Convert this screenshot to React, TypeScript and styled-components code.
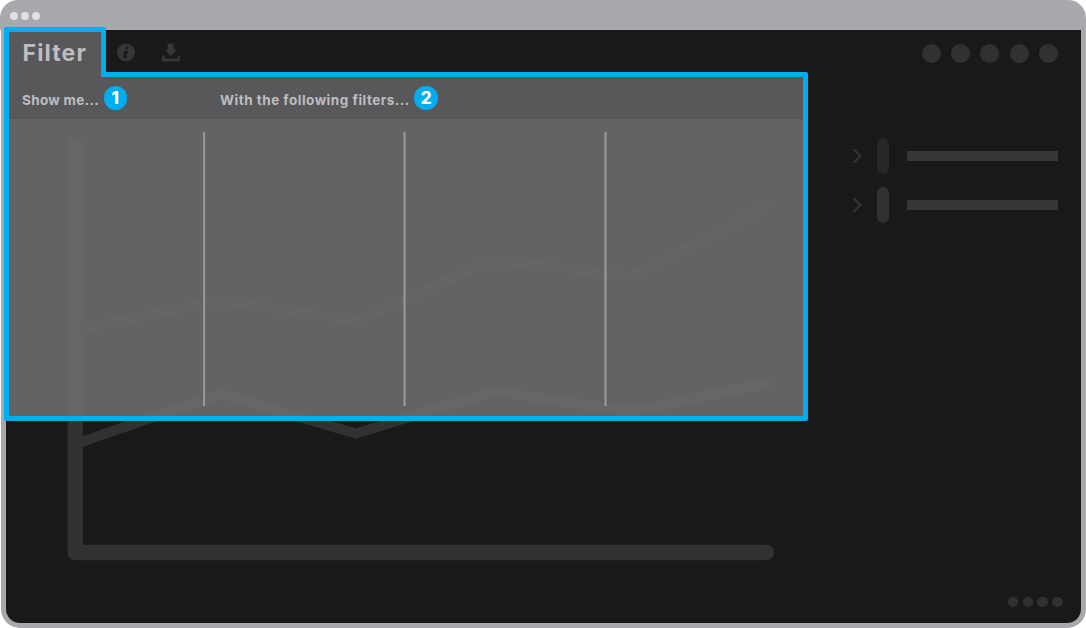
import React from "react";
import styled, { createGlobalStyle } from "styled-components";

const color = {
  frame: "#a7a9ac",
  screen: "#191919",
  shape: "#33312f",
  shapeDim: "#282624",
  icon: "#373536",
  accent: "#00aeef",
  header: "#58585a",
  label: "#bcbec0",
};

const GlobalStyle = createGlobalStyle`
  * { box-sizing: border-box; }
  body { margin: 0; background: #fff; font-family: Inter, "Liberation Sans", sans-serif; }
`;

const Window = styled.div`
  position: relative;
  display: flex;
  flex-direction: column;
  width: 1086px;
  height: 628px;
`;

const TitleBar = styled.header`
  display: flex;
  align-items: center;
  gap: 2.5px;
  height: 30px;
  padding: 2px 0 0 9.7px;
  border-radius: 18px 18px 0 0;
  background: ${color.frame};
`;

const Dot = styled.span<{ $size: number; $fill?: string }>`
  width: ${(p) => p.$size}px;
  height: ${(p) => p.$size}px;
  border-radius: 50%;
  background: ${(p) => p.$fill ?? color.shape};
`;

const Frame = styled.div`
  display: flex;
  flex: 1;
  margin: 0 0.5px 0.5px 1px;
  padding: 0 5px 5px;
  border-radius: 0 0 19px 19px;
  background: ${color.frame};
`;

const Screen = styled.main`
  display: flex;
  flex: 1;
  flex-direction: column;
  border-radius: 0 0 14px 14px;
  background: ${color.screen};
`;

const Toolbar = styled.div`
  display: flex;
  align-items: center;
  justify-content: space-between;
  height: 46px;
  padding: 0 22.8px 0 110px;
`;

const IconGroup = styled.div`
  display: flex;
  align-items: center;
  gap: 26px;
  padding-bottom: 1px;
`;

const DotGroup = styled.div<{ $gap: number }>`
  display: flex;
  gap: ${(p) => p.$gap}px;
  padding-top: 1px;
`;

const Content = styled.div`
  display: flex;
  flex: 1;
`;

const ChartArea = styled.svg`
  flex: none;
  width: 810px;
  height: 500px;
`;

const Legend = styled.aside`
  display: flex;
  flex: 1;
  flex-direction: column;
  gap: 13px;
  padding: 62px 23px 0 36px;
`;

const LegendRow = styled.div`
  display: flex;
  align-items: center;
  height: 36px;
`;

const Chevron = styled.svg`
  width: 10px;
  height: 16px;
  margin-right: 15.4px;
`;

const Pill = styled.span<{ $fill: string }>`
  width: 12px;
  height: 36px;
  border-radius: 6px;
  margin-right: 17.6px;
  background: ${(p) => p.$fill};
`;

const Bar = styled.span`
  flex: 1;
  height: 10.5px;
  background: ${color.icon};
`;

const Footer = styled.footer`
  display: flex;
  justify-content: flex-end;
  height: 46.6px;
  padding: 20px 17.8px 0 0;
`;

const FilterOverlay = styled.section`
  position: absolute;
  top: 27px;
  left: 3.5px;
  display: flex;
  flex-direction: column;
  width: 804.5px;
  height: 394px;
`;

const FilterTab = styled.h1`
  position: relative;
  z-index: 1;
  width: 102.5px;
  height: 50px;
  margin: 0 0 -5px;
  padding: 5px 0 0 14px;
  border: 5px solid ${color.accent};
  border-bottom: 0;
  border-radius: 2px 2px 0 0;
  background: ${color.header};
  color: ${color.label};
  font-size: 23px;
  font-weight: 700;
  line-height: 32px;
  letter-spacing: 1.15px;
`;

const FilterPanel = styled.div`
  display: flex;
  flex: 1;
  flex-direction: column;
  border: 5px solid ${color.accent};
  border-radius: 0 2px 2px 2px;
`;

const FilterHeader = styled.div`
  display: grid;
  grid-template-columns: 198px 1fr;
  height: 42px;
  padding-left: 13.5px;
  background: ${color.header};
`;

const Heading = styled.h2`
  display: flex;
  margin: 0;
  padding-top: 9px;
  color: ${color.label};
  font-size: 13.5px;
  font-weight: 700;
  line-height: 28px;
`;

const HeadingText = styled.span<{ $width: number; $spacing: number }>`
  width: ${(p) => p.$width}px;
  letter-spacing: ${(p) => p.$spacing}px;
  white-space: nowrap;
`;

const Badge = styled.span`
  width: 23.5px;
  height: 23.5px;
  border-radius: 50%;
  background: ${color.accent};
  color: #fff;
  font-size: 17px;
  font-weight: 800;
  line-height: 24px;
  text-align: center;
`;

const FilterColumns = styled.div`
  display: grid;
  grid-template-columns: 197.5px 200px 201px 1fr;
  flex: 1;
  padding: 13px 0 10px;
  background: rgba(108, 109, 111, 0.89);
`;

const Column = styled.div<{ $last?: boolean; $sharp?: boolean }>`
  display: flex;
  justify-content: flex-end;

  &::after {
    content: "";
    display: ${(p) => (p.$last ? "none" : "block")};
    width: 3px;
    background: ${(p) =>
      p.$sharp
        ? "linear-gradient(90deg, #949597 2px, rgba(148, 149, 151, 0.15) 2px)"
        : "linear-gradient(90deg, rgba(148,149,151,.6) 1px, #98999b 1px, #98999b 2px, rgba(148,149,151,.6) 2px)"};
  }
`;

function InfoIcon() {
  return (
    <svg width="19" height="19" viewBox="-0.5 0 19 19">
      <circle cx="9.5" cy="9.5" r="9" fill={color.icon} />
      <circle cx="10.6" cy="4.9" r="1.3" fill={color.screen} />
      <path
        d="M7.4 7.7h3.8l-1.5 5.5c-.1.5.2.5 1-.2l.3.4c-1 1.3-2.1 1.8-3.1 1.7-1.1-.1-1.3-.8-1.1-1.6l1.2-4.5c.1-.5-.1-.6-.8-.7z"
        fill={color.screen}
      />
    </svg>
  );
}

function DownloadIcon() {
  return (
    <svg width="19" height="19" viewBox="-0.5 0 19 19">
      <path d="M6.2.5h6v6h3.2L9.3 13.3 3.2 6.5h3z" fill={color.icon} />
      <path d="M.5 12.8h2.6v2.8h12.8v-2.8h2.6v5.7H.5z" fill={color.icon} />
    </svg>
  );
}

function Chart() {
  return (
    <ChartArea viewBox="6 76 810 500" fill="none">
      <path
        d="M75.2 145.5V552.5H766.5"
        stroke={color.shape}
        strokeWidth="15.4"
        strokeLinecap="round"
        strokeLinejoin="round"
      />
      <polyline
        points="82,441.8 220,394 356,433.5 494,391 631,411.5 766.3,383.5"
        stroke={color.shape}
        strokeWidth="10"
        strokeLinecap="round"
      />
      <polyline
        points="82,329 220,300 356.5,321 494,259.5 631,276.5 766.3,207"
        stroke={color.shapeDim}
        strokeWidth="10"
        strokeLinecap="round"
      />
    </ChartArea>
  );
}

export default function App() {
  return (
    <>
      <GlobalStyle />
      <Window>
        <TitleBar>
          {[0, 1, 2].map((i) => (
            <Dot key={i} $size={8.5} $fill="#e0e1e3" />
          ))}
        </TitleBar>
        <Frame>
          <Screen>
            <Toolbar>
              <IconGroup>
                <InfoIcon />
                <DownloadIcon />
              </IconGroup>
              <DotGroup $gap={10.3}>
                {[0, 1, 2, 3, 4].map((i) => (
                  <Dot key={i} $size={18.9} />
                ))}
              </DotGroup>
            </Toolbar>
            <Content>
              <Chart />
              <Legend>
                {[color.shapeDim, color.shape].map((fill) => (
                  <LegendRow key={fill}>
                    <Chevron viewBox="0 0 10 16" fill="none">
                      <path d="M1.4 1.1 8.4 8 1.4 14.9" stroke={color.icon} strokeWidth="2" />
                    </Chevron>
                    <Pill $fill={fill} />
                    <Bar />
                  </LegendRow>
                ))}
              </Legend>
            </Content>
            <Footer>
              <DotGroup $gap={4.5}>
                {[0, 1, 2, 3].map((i) => (
                  <Dot key={i} $size={10.4} />
                ))}
              </DotGroup>
            </Footer>
          </Screen>
        </Frame>
        <FilterOverlay>
          <FilterTab>Filter</FilterTab>
          <FilterPanel>
            <FilterHeader>
              <Heading>
                <HeadingText $width={81.6} $spacing={0.32}>
                  Show me...
                </HeadingText>
                <Badge>1</Badge>
              </Heading>
              <Heading>
                <HeadingText $width={194.4} $spacing={0.5}>
                  With the following filters...
                </HeadingText>
                <Badge>2</Badge>
              </Heading>
            </FilterHeader>
            <FilterColumns>
              <Column $sharp />
              <Column />
              <Column />
              <Column $last />
            </FilterColumns>
          </FilterPanel>
        </FilterOverlay>
      </Window>
    </>
  );
}
